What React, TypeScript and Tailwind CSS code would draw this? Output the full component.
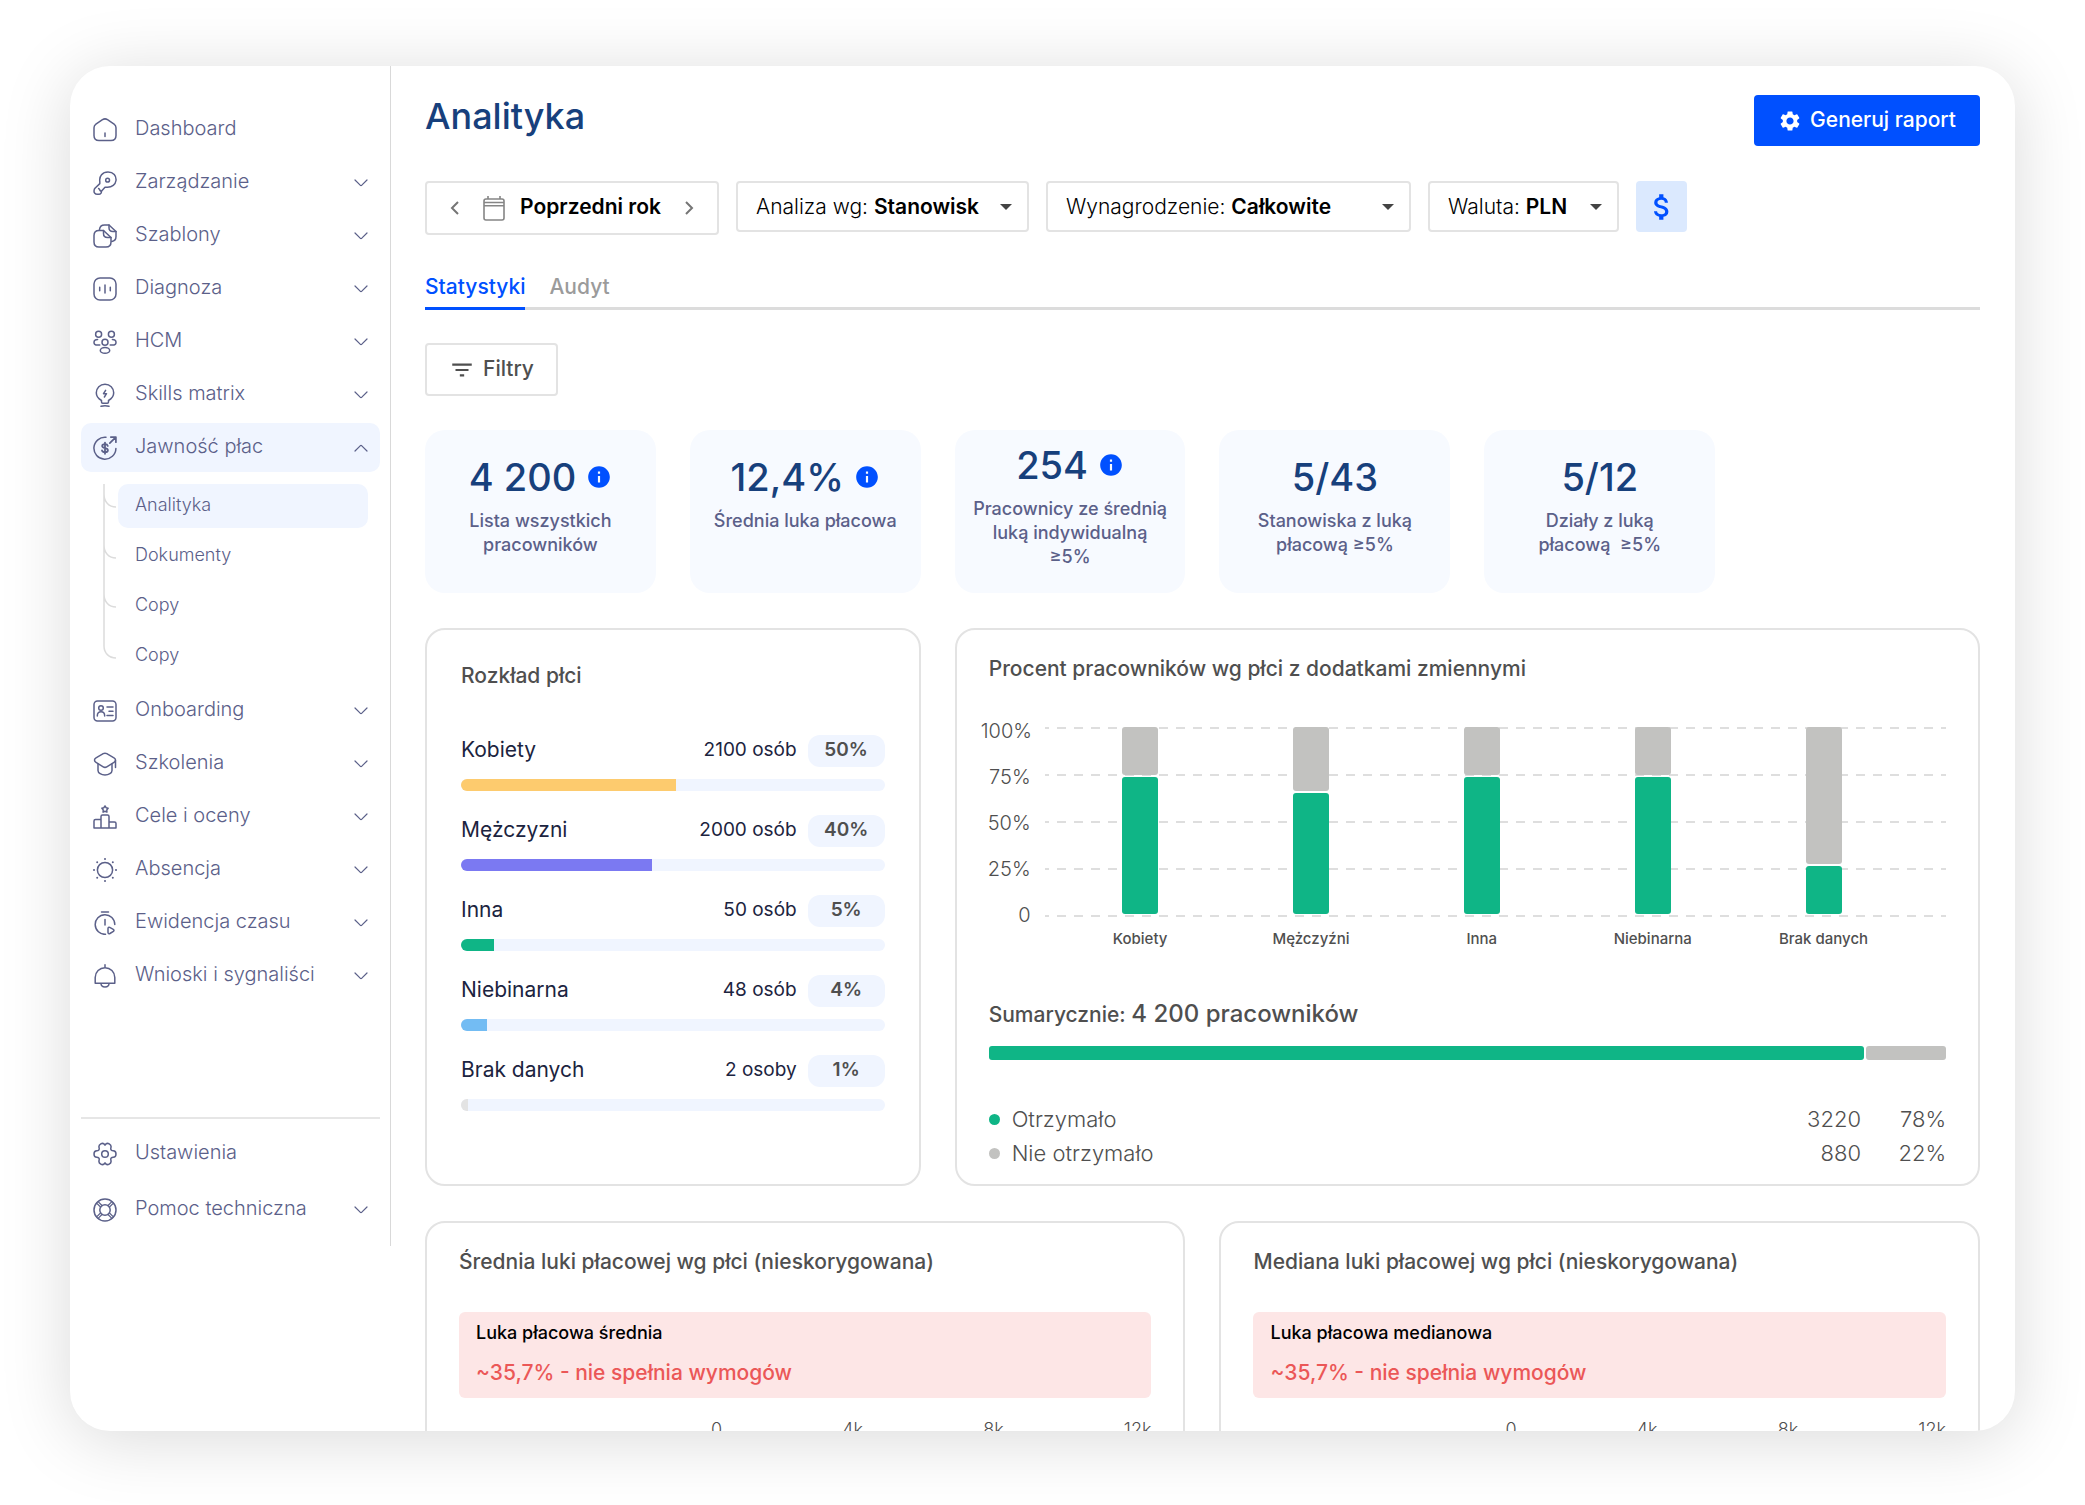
/**
 * Pay transparency analytics
 * - Sidebar navigation with an expanded sub menu
 * - Report filters, tabs and key figures
 * - Gender distribution, bonus share and pay gap panels
 */

import type { ReactNode } from 'react';
import { MdAttachMoney, MdFilterList, MdInfo, MdSettings } from 'react-icons/md';

/* Icons */

function Icon({ children }: { children: ReactNode }) {
  return (
    <svg
      viewBox="0 0 24 24"
      className="size-6 shrink-0"
      fill="none"
      stroke="currentColor"
      strokeWidth="1.5"
      strokeLinecap="round"
      strokeLinejoin="round"
      aria-hidden="true"
    >
      {children}
    </svg>
  );
}

const icons = {
  home: (
    <Icon>
      <path d="M1 17.5V9.8c0-1.5.7-2.8 1.9-3.7l6.6-4.4c1.5-1 3.5-1 5 0l6.6 4.4c1.2.9 1.9 2.2 1.9 3.7v7.7c0 3-2 5-5 5H6c-3 0-5-2-5-5Z" />
      <path d="M12 15v3.5" />
    </Icon>
  ),
  key: (
    <Icon>
      <path d="M6.8 12.6v-2.1C6 5 9.5 1 15 1s8.5 3.6 8 8.5c-.5 4-4 6.8-8.5 6.8H12l-3.6 4c.2 1.6-.9 3-3.1 3-2.6 0-4.3-1-4.3-3.4 0-1.4.5-2.4 1.5-3.2l4.3-4.1Z" />
      <path d="M5.6 17.6c1.2.2.7 2.4 2.8 2.7" />
      <circle cx="14.6" cy="9.2" r="1.9" />
    </Icon>
  ),
  files: (
    <Icon>
      <path d="M10.5 6.5H6c-3 0-5 1.8-5 5V18c0 3 2 5 5 5h7c3 0 5-2 5-5v-4.5l-7.5-7Z" />
      <path d="M10.5 6.5v3c0 2.6 1.4 4 4 4H18" />
      <path d="M6.5 6V5.5C6.8 2.5 8.5 1 11.5 1H16l7 6.5v5c0 2.8-1.4 4.5-4.2 4.9" />
      <path d="M16 1v2.8c0 2.4 1.3 3.7 3.8 3.7H23" />
    </Icon>
  ),
  chart: (
    <Icon>
      <rect x="1" y="1" width="22" height="22" rx="6" />
      <path d="M12 8v8M6.7 10.3v3.4M17.3 10.3v3.4" />
    </Icon>
  ),
  people: (
    <Icon>
      <circle cx="5.6" cy="4.2" r="3" />
      <circle cx="18.4" cy="4.2" r="3" />
      <circle cx="12" cy="12.2" r="3" />
      <ellipse cx="12" cy="20.4" rx="4.7" ry="2.8" />
      <path d="M4.6 9.6C2.4 9.6 1 10.8 1 12.4c0 1.6 1.4 2.6 3.6 2.6h2.2M19.4 9.6c2.2 0 3.6 1.2 3.6 2.8 0 1.6-1.4 2.6-3.6 2.6h-2.2" />
    </Icon>
  ),
  bulb: (
    <Icon>
      <path d="M8.5 19v-1.5c-2.9-1.6-5.2-4-5.2-7.7C3.3 5 7 1.2 12 1.2S20.7 5 20.7 9.8c0 3.7-2.3 6.1-5.2 7.7V19c0 .8-.5 1.2-1.2 1.2H9.7c-.7 0-1.2-.4-1.2-1.2Z" />
      <path d="M8 23.3c2.5-.6 5.5-.6 8 0" />
      <path d="m12.6 7.4-2.1 3.3h3l-2.1 3.3" />
    </Icon>
  ),
  money: (
    <Icon>
      <path d="M13 1.3A11 11 0 1 0 22.9 12.5" />
      <path d="m16.8 7.2 5.8-5.8M17.8 1.1h5.1v5.1" strokeWidth="1.7" />
      <path
        d="M14.8 9.9c-.3-1.1-1.3-1.7-2.8-1.7-1.7 0-2.8.7-2.8 1.9 0 2.9 5.7 1.2 5.7 4.1 0 1.2-1.2 2-2.9 2-1.6 0-2.7-.7-3-1.8M12 6.6v11.2"
        strokeWidth="1.8"
      />
    </Icon>
  ),
  badge: (
    <Icon>
      <rect x="1" y="2" width="22" height="20" rx="3.5" />
      <circle cx="8" cy="9" r="2.3" />
      <path d="M4.3 17c0-2.8 1.4-4.2 3.7-4.2s3.7 1.4 3.7 4.2M14 8h6M16 12.3h4M14 16.5h6" />
    </Icon>
  ),
  cap: (
    <Icon>
      <path d="M10.2 1.7 3 5.8C1 6.9 1 9.2 3 10.4l7.2 4.4c1.1.7 2.5.7 3.6 0l7.2-4.4c2-1.2 2-3.5 0-4.6l-7.2-4.1c-1.1-.6-2.5-.6-3.6 0Z" />
      <path d="M5 12v6.4C5 20.9 8.3 23 12 23s7-2.1 7-4.6V12M22.5 8.5v7" />
    </Icon>
  ),
  podium: (
    <Icon>
      <path d="M8 23V11.5c0-.9.6-1.5 1.5-1.5h5c.9 0 1.5.6 1.5 1.5V23M8 14.5H2.5c-.9 0-1.5.6-1.5 1.5v7h22v-4.5c0-.9-.6-1.5-1.5-1.5H16" />
      <path d="m12 1 1.1 1.7 2 .5-1.3 1.7.1 2.2-1.9-.8-1.9.8.1-2.2-1.3-1.7 2-.5L12 1Z" />
    </Icon>
  ),
  sun: (
    <Icon>
      <circle cx="12" cy="12" r="7.6" />
      <path
        d="M12 1h.01M12 23h.01M1 12h.01M23 12h.01M4.2 4.2h.01M19.8 4.2h.01M4.2 19.8h.01M19.8 19.8h.01"
        strokeWidth="2"
      />
    </Icon>
  ),
  timer: (
    <Icon>
      <path d="M12.5 23.3A9.8 9.8 0 1 1 21.8 13.5M8.5 1h7M12 8.5V14" />
      <path d="M15 17.5c0-1 .8-1.5 1.7-1.1l3.6 1.9c.9.5.9 1.5.1 2l-3.5 2.2c-.9.5-1.9 0-1.9-1v-4Z" />
    </Icon>
  ),
  bell: (
    <Icon>
      <path d="M2.2 19.3v-5.8a9.8 9.8 0 0 1 19.6 0v5.8H2.2ZM12 .8v2.9M8 19.5c0 2 1.7 3.4 4 3.4s4-1.4 4-3.4" />
    </Icon>
  ),
  gear: (
    <Icon>
      <path d="M12 3.2c1-1.7 2.4-2.3 4.2-1.3 2.2 1.2 2.2 2.2 1.7 3.9-.5 1.8.6 2.9 2.3 2.9 2 0 2.8 1 2.8 3.3s-.8 3.3-2.8 3.3c-1.7 0-2.8 1.1-2.3 2.9.5 1.7.5 2.7-1.7 3.9-1.8 1-3.2.4-4.2-1.3-1 1.7-2.4 2.3-4.2 1.3-2.2-1.2-2.2-2.2-1.7-3.9.5-1.8-.6-2.9-2.3-2.9-2 0-2.8-1-2.8-3.3s.8-3.3 2.8-3.3c1.7 0 2.8-1.1 2.3-2.9-.5-1.7-.5-2.7 1.7-3.9 1.8-1 3.2-.4 4.2 1.3Z" />
      <circle cx="12" cy="12" r="3.3" />
    </Icon>
  ),
  lifebuoy: (
    <Icon>
      <circle cx="12" cy="12" r="11" />
      <circle cx="12" cy="12" r="5.2" />
      <path
        d="m3.6 5.1 3.9 3.9M5.1 3.6 9 7.5M20.4 5.1 16.5 9M18.9 3.6 15 7.5M3.6 18.9 7.5 15M5.1 20.4 9 16.5M20.4 18.9 16.5 15M18.9 20.4 15 16.5"
        strokeWidth="1.2"
      />
    </Icon>
  ),
};

type IconName = keyof typeof icons;

function Chevron({ open = false }: { open?: boolean }) {
  return (
    <svg
      viewBox="0 0 14 8"
      className="h-2 w-3.5 shrink-0"
      fill="none"
      stroke="currentColor"
      strokeWidth="1.2"
      strokeLinecap="round"
      strokeLinejoin="round"
      aria-hidden="true"
    >
      <path d={open ? 'M1 7l5.2-5.2c.5-.4 1.1-.4 1.6 0L13 7' : 'M1 1l5.2 5.2c.5.4 1.1.4 1.6 0L13 1'} />
    </svg>
  );
}

/* Sidebar */

interface NavEntry {
  label: string;
  icon: IconName;
  expandable?: boolean;
}

const navTop: NavEntry[] = [
  { label: 'Dashboard', icon: 'home' },
  { label: 'Zarządzanie', icon: 'key', expandable: true },
  { label: 'Szablony', icon: 'files', expandable: true },
  { label: 'Diagnoza', icon: 'chart', expandable: true },
  { label: 'HCM', icon: 'people', expandable: true },
  { label: 'Skills matrix', icon: 'bulb', expandable: true },
];

const navBottom: NavEntry[] = [
  { label: 'Onboarding', icon: 'badge', expandable: true },
  { label: 'Szkolenia', icon: 'cap', expandable: true },
  { label: 'Cele i oceny', icon: 'podium', expandable: true },
  { label: 'Absencja', icon: 'sun', expandable: true },
  { label: 'Ewidencja czasu', icon: 'timer', expandable: true },
  { label: 'Wnioski i sygnaliści', icon: 'bell', expandable: true },
];

const subMenu = ['Analityka', 'Dokumenty', 'Copy', 'Copy'];

function NavItem({ label, icon, expandable, open }: NavEntry & { open?: boolean }) {
  return (
    <a
      href="#"
      className={`flex h-[49px] items-center rounded-[10px] pr-3 pl-3 text-xl font-light ${open ? 'bg-[#f0f5ff]' : ''}`}
    >
      {icons[icon]}
      <span className="ml-[18px] flex-1 pb-1">{label}</span>
      {expandable && <Chevron open={open} />}
    </a>
  );
}

function Sidebar() {
  return (
    <aside className="w-[321px] shrink-0 self-start border-r border-[#d9d9d9] pt-[39px] pr-2.5 pb-3 pl-[11px] text-[#5b6089]">
      <nav className="flex flex-col gap-1">
        {navTop.map((item) => (
          <NavItem key={item.label} {...item} />
        ))}
        <NavItem label="Jawność płac" icon="money" expandable open />
        <div className="mb-1 flex pt-2 pr-3">
          <svg
            viewBox="0 0 37 176"
            className="h-44 w-[37px] shrink-0"
            fill="none"
            stroke="#dcdcdc"
            strokeWidth="1.5"
            aria-hidden="true"
          >
            <path d="M23 0v162c0 7 5 12 12 12M23 10c0 8 5 13 12 13M23 61c0 8 5 13 12 13M23 110c0 8 5 13 12 13" />
          </svg>
          <div className="flex flex-1 flex-col gap-1.5">
            {subMenu.map((label, index) => (
              <a
                key={index}
                href="#"
                className={`flex h-11 items-center rounded-[10px] pb-0.5 pl-[17px] text-lg font-light ${index === 0 ? 'bg-[#f0f5ff]' : ''}`}
              >
                {label}
              </a>
            ))}
          </div>
        </div>
        {navBottom.map((item) => (
          <NavItem key={item.label} {...item} />
        ))}
      </nav>
      <nav className="mt-[117px] flex flex-col gap-[7px] border-t-2 border-[#e6e6e6] pt-2.5">
        <NavItem label="Ustawienia" icon="gear" />
        <NavItem label="Pomoc techniczna" icon="lifebuoy" expandable />
      </nav>
    </aside>
  );
}

/* Filters */

interface FilterSelectProps {
  id: string;
  label: string;
  value: string;
  className: string;
}

function FilterSelect({ id, label, value, className }: FilterSelectProps) {
  return (
    <div
      className={`flex h-[51px] items-center rounded border-2 border-[#e3e3e3] pr-[15px] pl-[18px] text-[21px] text-black ${className}`}
    >
      <label htmlFor={id} className="whitespace-pre font-light">
        {label}:{' '}
      </label>
      <select id={id} className="min-w-0 flex-1 appearance-none bg-transparent font-semibold">
        <option>{value}</option>
      </select>
      <svg viewBox="0 0 12 6" className="h-1.5 w-3 shrink-0" fill="#444" aria-hidden="true">
        <path d="M0 0h12L6 6Z" />
      </svg>
    </div>
  );
}

function Filters() {
  return (
    <div className="mt-[35px] flex items-start gap-[17px]">
      <div className="flex h-[54px] w-[294px] items-center justify-between rounded border-2 border-[#e3e3e3] px-[23px] text-[#757575]">
        <button type="button" aria-label="Poprzedni okres">
          <svg viewBox="0 0 9 14" className="h-3.5 w-[9px]" fill="none" stroke="currentColor" strokeWidth="2" aria-hidden="true">
            <path d="M8 1 2 7l6 6" />
          </svg>
        </button>
        <button type="button" className="flex items-center gap-[15px] text-[21px] font-semibold text-black">
          <svg viewBox="0 0 22 25" className="h-[25px] w-[22px]" fill="none" stroke="#858585" strokeWidth="1.6" aria-hidden="true">
            <rect x="1" y="3" width="20" height="21" rx="2" />
            <path d="M1 6.5h20M1 9.7h20M5 0v3M17 0v3" />
          </svg>
          <span className="pb-0.5">Poprzedni rok</span>
        </button>
        <button type="button" aria-label="Następny okres">
          <svg viewBox="0 0 9 14" className="h-3.5 w-[9px]" fill="none" stroke="currentColor" strokeWidth="2" aria-hidden="true">
            <path d="m1 1 6 6-6 6" />
          </svg>
        </button>
      </div>
      <FilterSelect id="analysis" label="Analiza wg" value="Stanowisk" className="w-[293px]" />
      <FilterSelect id="salary" label="Wynagrodzenie" value="Całkowite" className="w-[365px]" />
      <FilterSelect id="currency" label="Waluta" value="PLN" className="w-[191px]" />
      <button
        type="button"
        aria-label="Kwoty"
        className="flex size-[51px] items-center justify-center rounded bg-[#dbe9fe] text-[#0050ff]"
      >
        <MdAttachMoney className="size-[34px]" />
      </button>
    </div>
  );
}

/* Key figures */

const stats = [
  { value: '4 200', label: 'Lista wszystkich\npracowników', info: true },
  { value: '12,4%', label: 'Średnia luka płacowa', info: true },
  { value: '254', label: 'Pracownicy ze średnią\nluką indywidualną\n≥5%', info: true },
  { value: '5/43', label: 'Stanowiska z luką\npłacową ≥5%' },
  { value: '5/12', label: 'Działy z luką\npłacową\u00a0 ≥5%' },
];

function StatCard({ value, label, info }: { value: string; label: string; info?: boolean }) {
  return (
    <div className="flex h-[163px] flex-col items-center justify-center rounded-[20px] bg-[#f7faff] px-2 pb-0.5 text-center">
      <div className="flex items-center gap-2.5 text-[38px] leading-[26px] font-medium text-[#17407c]">
        {value}
        {info && <MdInfo className="size-[26px] text-[#0050ff]" />}
      </div>
      <p className="mt-[19px] min-h-12 text-lg leading-6 font-medium whitespace-pre-line text-[#5b6089]">{label}</p>
    </div>
  );
}

/* Gender distribution */

const genders = [
  { label: 'Kobiety', count: '2100 osób', share: '50%', width: 50.7, color: 'bg-[#fdcb6e]' },
  { label: 'Mężczyzni', count: '2000 osób', share: '40%', width: 45, color: 'bg-[#7b79f2]' },
  { label: 'Inna', count: '50 osób', share: '5%', width: 7.8, color: 'bg-[#0fb586]' },
  { label: 'Niebinarna', count: '48 osób', share: '4%', width: 6.1, color: 'bg-[#73bcf3]' },
  { label: 'Brak danych', count: '2 osoby', share: '1%', width: 1.7, color: 'bg-[#e3e3e3]' },
];

function GenderPanel() {
  return (
    <section className="col-span-2 rounded-[20px] border-2 border-[#e3e3e3] px-[34px] pt-[31px]">
      <h2 className="text-[21px] leading-[30px] font-medium text-[#4f4f4f]">Rozkład płci</h2>
      <ul className="mt-11 flex flex-col gap-6">
        {genders.map((g) => (
          <li key={g.label}>
            <div className="flex items-center text-[#1c2440]">
              <span className="flex-1 pb-0.5 text-[21px] leading-7">{g.label}</span>
              <span className="pb-0.5 text-[19px] leading-7">{g.count}</span>
              <span className="ml-[11px] flex h-8 w-[77px] items-center justify-center rounded-xl bg-[#f0f5ff] pb-0.5 text-[19px] font-semibold text-[#4f4f4f]">
                {g.share}
              </span>
            </div>
            <div className="mt-3 h-3 overflow-hidden rounded-full bg-[#f0f5ff]">
              <div className={`h-full ${g.color}`} style={{ width: `${g.width}%` }} />
            </div>
          </li>
        ))}
      </ul>
    </section>
  );
}

/* Bonus share */

const bars = [
  { label: 'Kobiety', rest: 25.5 },
  { label: 'Mężczyźni', rest: 34 },
  { label: 'Inna', rest: 25.5 },
  { label: 'Niebinarna', rest: 25.5 },
  { label: 'Brak danych', rest: 73 },
];

function BonusChart() {
  return (
    <div className="mt-[33px] -ml-2 flex">
      <div className="flex w-[50px] shrink-0 flex-col gap-[17px] text-right text-xl leading-[29px] font-light text-[#4f4f4f]">
        {['100%', '75%', '50%', '25%', '0'].map((tick) => (
          <span key={tick}>{tick}</span>
        ))}
      </div>
      <div className="ml-3.5 min-w-0 flex-1 pt-2.5">
        <div className="relative h-[190px]">
          <svg className="absolute inset-0 size-full" stroke="#dedede" strokeWidth="2" strokeDasharray="9 8" aria-hidden="true">
            {[1, 48, 95, 142, 189].map((y) => (
              <line key={y} x1="-5" x2="100%" y1={y} y2={y} />
            ))}
          </svg>
          <div className="relative mr-[37px] ml-2.5 grid h-[187px] grid-cols-5 justify-items-center">
            {bars.map((bar) => (
              <div key={bar.label} className="flex h-full w-9 flex-col gap-0.5">
                <div className="shrink-0 rounded-[3px] bg-[#c2c2c0]" style={{ height: `${bar.rest}%` }} />
                <div className="flex-1 rounded-[3px] bg-[#0fb586]" />
              </div>
            ))}
          </div>
        </div>
        <div className="mt-2.5 mr-[37px] ml-2.5 grid grid-cols-5 text-center text-[15px] leading-6 font-medium text-[#4f4f4f]">
          {bars.map((bar) => (
            <span key={bar.label}>{bar.label}</span>
          ))}
        </div>
      </div>
    </div>
  );
}

const totals = [
  { label: 'Otrzymało', count: '3220', share: '78%', dot: 'bg-[#0fb586]' },
  { label: 'Nie otrzymało', count: '880', share: '22%', dot: 'bg-[#c2c2c0]' },
];

function BonusPanel() {
  return (
    <section className="col-span-4 rounded-[20px] border-2 border-[#e3e3e3] px-8 pt-6 pb-3.5">
      <h2 className="text-[21px] leading-[30px] font-medium text-[#4f4f4f]">
        Procent pracowników wg płci z dodatkami zmiennymi
      </h2>
      <BonusChart />
      <p className="mt-[45px] text-[21px] leading-9 font-medium text-[#4f4f4f]">
        Sumarycznie: <span className="text-2xl leading-9">4 200 pracowników</span>
      </p>
      <div className="mt-[13px] flex h-3.5 gap-0.5">
        <div className="rounded-[3px] bg-[#0fb586]" style={{ width: '91.4%' }} />
        <div className="flex-1 rounded-[3px] bg-[#c2c2c0]" />
      </div>
      <table className="mt-[42px] w-full text-[22px] leading-[34px] font-light text-[#4f4f4f]">
        <tbody>
          {totals.map((row) => (
            <tr key={row.label}>
              <th scope="row" className="flex items-center gap-3 text-left font-light">
                <span className={`size-[11px] rounded-full ${row.dot}`} />
                {row.label}
              </th>
              <td className="text-right">{row.count}</td>
              <td className="w-[85px] text-right">{row.share}</td>
            </tr>
          ))}
        </tbody>
      </table>
    </section>
  );
}

/* Pay gap */

function GapPanel({ title, label }: { title: string; label: string }) {
  return (
    <section className="col-span-3 h-[500px] rounded-[20px] border-2 border-[#e3e3e3] px-8 pt-6">
      <h2 className="text-[21px] leading-[30px] font-medium text-[#4f4f4f]">{title}</h2>
      <div className="mt-[35px] rounded-md bg-[#fde6e6] px-[17px] pt-1.5 pb-2">
        <p className="text-lg leading-[30px] font-medium text-black">{label}</p>
        <p className="mt-2 text-[21px] leading-[34px] font-medium text-[#eb5757]">~35,7% - nie spełnia wymogów</p>
      </div>
      <div className="mt-[17px] flex justify-between pl-[252px] text-lg leading-[30px] font-light text-[#4f4f4f]">
        <span>0</span>
        <span>4k</span>
        <span>8k</span>
        <span>12k</span>
      </div>
    </section>
  );
}

export default function App() {
  return (
    <div className="h-screen bg-white px-[70px] pt-[66px] pb-[74px] font-['Inter',sans-serif]">
      <div className="flex h-full overflow-hidden rounded-[40px] bg-white shadow-[0_8px_70px_rgba(0,0,0,0.15)]">
        <Sidebar />
        <main className="min-w-0 flex-1 pt-[29px] pr-[35px] pl-[34px]">
          <header className="flex items-start justify-between">
            <h1 className="text-4xl leading-[42px] font-medium text-[#17407c]">Analityka</h1>
            <button
              type="button"
              className="flex h-[51px] items-center gap-2 rounded bg-[#0050ff] px-6 text-[21px] font-medium text-white"
            >
              <MdSettings className="size-6" />
              <span className="pb-0.5">Generuj raport</span>
            </button>
          </header>

          <Filters />

          <div
            role="tablist"
            className="mt-[37px] flex gap-6 border-b-[3px] border-[#dcdcdc] text-[21px] leading-[30px] font-medium"
          >
            <button
              type="button"
              role="tab"
              aria-selected="true"
              className="-mb-[3px] border-b-[3px] border-[#0050ff] pb-[5px] text-[#0050ff]"
            >
              Statystyki
            </button>
            <button type="button" role="tab" aria-selected="false" className="pb-[5px] text-[#9b9b9b]">
              Audyt
            </button>
          </div>

          <button
            type="button"
            className="mt-[33px] flex h-[53px] items-center gap-2 rounded border-2 border-[#e3e3e3] px-[22px] text-[21px] font-medium text-[#4f4f4f]"
          >
            <MdFilterList className="size-[26px]" />
            <span className="pb-0.5">Filtry</span>
          </button>

          <div className="mt-[34px] grid grid-cols-6 gap-[34px]">
            {stats.map((stat) => (
              <StatCard key={stat.value} {...stat} />
            ))}
          </div>

          <div className="mt-[35px] grid grid-cols-6 gap-x-[34px] gap-y-[35px]">
            <GenderPanel />
            <BonusPanel />
            <GapPanel title="Średnia luki płacowej wg płci (nieskorygowana)" label="Luka płacowa średnia" />
            <GapPanel title="Mediana luki płacowej wg płci (nieskorygowana)" label="Luka płacowa medianowa" />
          </div>
        </main>
      </div>
    </div>
  );
}
